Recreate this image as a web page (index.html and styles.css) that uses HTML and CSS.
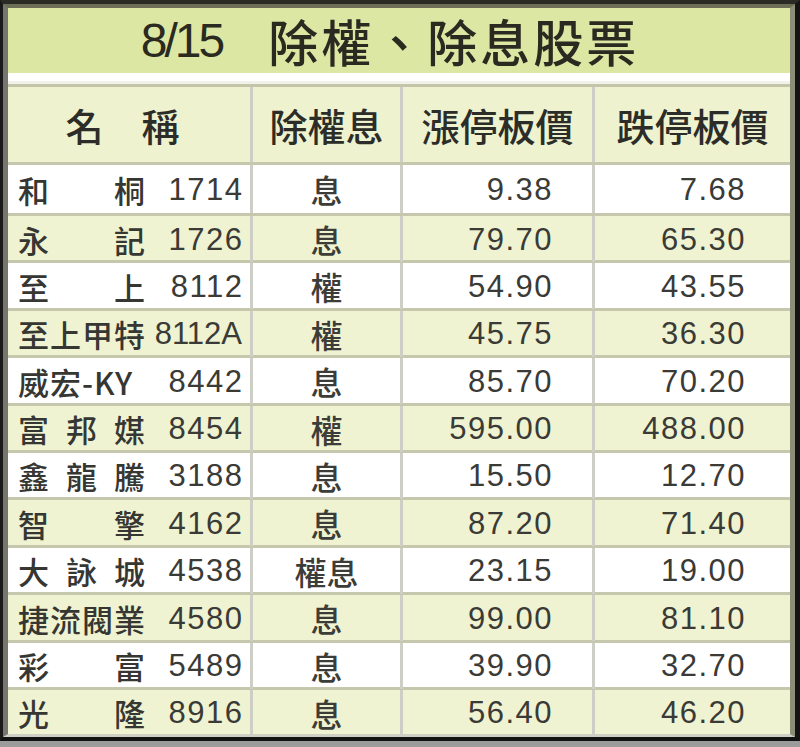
FILE: index.html
```html
<!DOCTYPE html>
<html lang="zh-Hant">
<head>
<meta charset="utf-8">
<title>8/15 除權、除息股票</title>
<link rel="stylesheet" href="styles.css">
</head>
<body>
<div class="frame">
  <div class="panel">
    <div class="title"><span class="date">8/15</span><span class="head">除權、除息股票</span></div>
    <div class="sep"></div>
    <div class="row hdr">
      <div class="c c1"><span class="hname">名　稱</span></div>
      <div class="c c2">除權息</div>
      <div class="c c3">漲停板價</div>
      <div class="c c4">跌停板價</div>
    </div>
    <div class="row first">
      <div class="c c1"><span class="nm">和桐</span><span class="code">1714</span></div>
      <div class="c c2">息</div><div class="c c3 num">9.38</div><div class="c c4 num">7.68</div>
    </div>
    <div class="row alt">
      <div class="c c1"><span class="nm">永記</span><span class="code">1726</span></div>
      <div class="c c2">息</div><div class="c c3 num">79.70</div><div class="c c4 num">65.30</div>
    </div>
    <div class="row">
      <div class="c c1"><span class="nm">至上</span><span class="code">8112</span></div>
      <div class="c c2">權</div><div class="c c3 num">54.90</div><div class="c c4 num">43.55</div>
    </div>
    <div class="row alt">
      <div class="c c1"><span class="nm">至上甲特</span><span class="code tight">8112A</span></div>
      <div class="c c2">權</div><div class="c c3 num">45.75</div><div class="c c4 num">36.30</div>
    </div>
    <div class="row">
      <div class="c c1"><span class="nm free">威宏-KY</span><span class="code">8442</span></div>
      <div class="c c2">息</div><div class="c c3 num">85.70</div><div class="c c4 num">70.20</div>
    </div>
    <div class="row alt">
      <div class="c c1"><span class="nm">富邦媒</span><span class="code">8454</span></div>
      <div class="c c2">權</div><div class="c c3 num">595.00</div><div class="c c4 num">488.00</div>
    </div>
    <div class="row">
      <div class="c c1"><span class="nm">鑫龍騰</span><span class="code">3188</span></div>
      <div class="c c2">息</div><div class="c c3 num">15.50</div><div class="c c4 num">12.70</div>
    </div>
    <div class="row alt">
      <div class="c c1"><span class="nm">智擎</span><span class="code">4162</span></div>
      <div class="c c2">息</div><div class="c c3 num">87.20</div><div class="c c4 num">71.40</div>
    </div>
    <div class="row">
      <div class="c c1"><span class="nm">大詠城</span><span class="code">4538</span></div>
      <div class="c c2">權息</div><div class="c c3 num">23.15</div><div class="c c4 num">19.00</div>
    </div>
    <div class="row alt">
      <div class="c c1"><span class="nm">捷流閥業</span><span class="code">4580</span></div>
      <div class="c c2">息</div><div class="c c3 num">99.00</div><div class="c c4 num">81.10</div>
    </div>
    <div class="row">
      <div class="c c1"><span class="nm">彩富</span><span class="code">5489</span></div>
      <div class="c c2">息</div><div class="c c3 num">39.90</div><div class="c c4 num">32.70</div>
    </div>
    <div class="row alt last">
      <div class="c c1"><span class="nm">光隆</span><span class="code">8916</span></div>
      <div class="c c2">息</div><div class="c c3 num">56.40</div><div class="c c4 num">46.20</div>
    </div>
  </div>
</div>
</body>
</html>
```

FILE: styles.css
```css
* { box-sizing: border-box; }
html, body { margin: 0; padding: 0; }
body {
  background: #9c9c9c;
  width: 800px;
  height: 747px;
  overflow: hidden;
  font-family: "Noto Sans CJK TC", "Noto Sans CJK SC", sans-serif;
  color: #2e2e2a;
}
.frame {
  width: 800px;
  border-top: 4px solid #2b2b26;
  border-left: 3px solid #1a1a1a;
  border-right: 5px solid #141414;
  border-bottom: 4px solid #121212;
}
.panel {
  border-top: 4px solid #6c6f55;
  border-left: 5px solid #76766e;
  border-right: 5px solid #8c8e78;
  border-bottom: 3px solid #cfd0c4;
  background: #ffffff;
}
.title {
  height: 65px;
  background: #dde7a4;
  display: flex;
  align-items: center;
  justify-content: center;
  padding-right: 18px;
  gap: 46px;
  color: #2a2a20;
}
.date {
  font-family: "Liberation Sans", Arial, sans-serif;
  font-size: 48px;
  letter-spacing: -3px;
  line-height: 1;
}
.head {
  font-size: 50px;
  font-weight: 500;
  letter-spacing: 3px;
  line-height: 1;
  margin-top: -2px;
}
.sep {
  height: 11px;
  background: linear-gradient(#ffffff 0 8px, #f1f2ea 8px 11px);
}
.row {
  display: grid;
  grid-template-columns: 245px 150px 192px 195px;
  height: 47.4px;
  border-bottom: 3px solid #c5c8ad;
  background: #ffffff;
}
.row.alt { background: #eff3d1; }
.row.first { height: 51px; }
.row.last { border-bottom: none; height: 44.4px; }
.row.hdr {
  height: 81px;
  border-top: 3px solid #c2c5a8;
  background: #eef2cf;
  font-size: 38px;
  font-weight: 500;
  color: #2c2c28;
}
.c {
  border-right: 3px solid #cdcec6;
  display: flex;
  align-items: center;
}
.c4 { border-right: none; }
.hdr .c { justify-content: center; }
.hdr .c1 { padding-right: 23px; }
.c1 {
  padding: 0 8px 0 10px;
  justify-content: space-between;
}
.nm {
  font-size: 31px;
  font-weight: 500;
  width: 127px;
  text-align: justify;
  text-align-last: justify;
  line-height: 1;
  color: #363632;
}
.nm.free {
  text-align-last: left;
  letter-spacing: 1px;
}
.code, .num {
  font-family: "Liberation Sans", Arial, sans-serif;
  font-size: 31px;
  letter-spacing: 1.5px;
  color: #3a3a36;
  line-height: 1;
}
.code { margin-right: -1.5px; }
.code.tight { letter-spacing: 0; margin-right: 0; }
.c2 {
  justify-content: center;
  font-size: 32px;
  font-weight: 500;
  color: #3c3c38;
}
.hdr .c2 { font-size: 38px; color: #2c2c28; }
.num { justify-content: flex-end; }
.c3.num { padding-right: 39px; }
.c4.num { padding-right: 44px; }
```
